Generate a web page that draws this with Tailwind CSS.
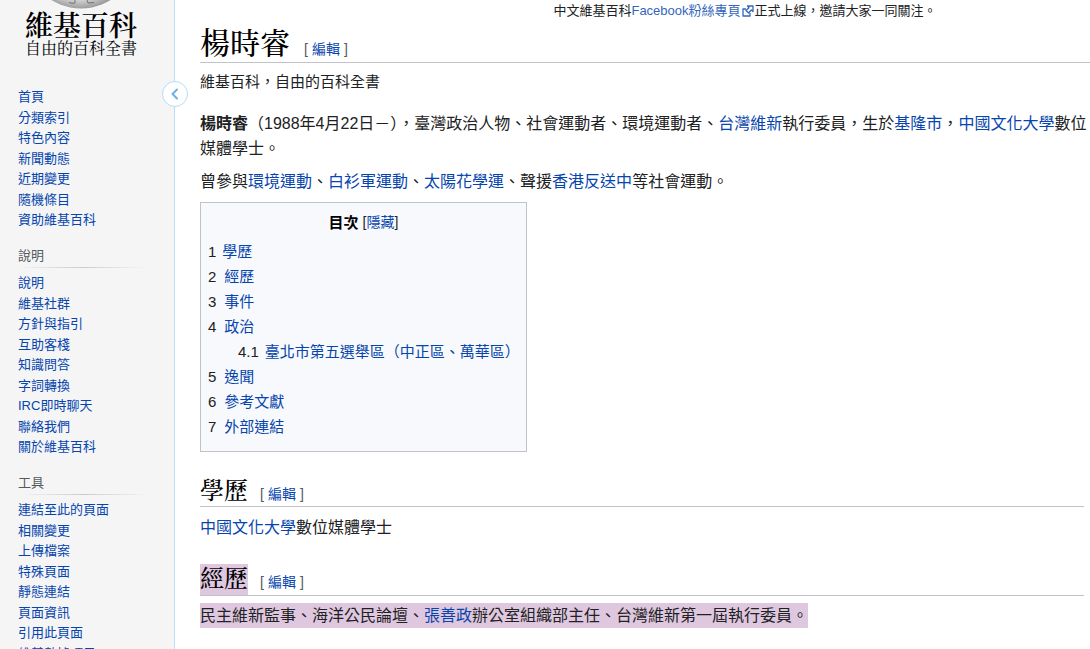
<!DOCTYPE html>
<html lang="zh-Hant-TW">
<head>
<meta charset="utf-8">
<meta name="viewport" content="width=device-width, initial-scale=1">
<title>楊時睿 - 維基百科，自由的百科全書</title>
<script src="https://cdn.jsdelivr.net/npm/@tailwindcss/browser@4"></script>
</head>
<body class="flex h-screen overflow-hidden bg-white font-['Liberation_Sans','Noto_Sans_CJK_TC',sans-serif] text-[#202122]">

<aside class="relative w-[175px] shrink-0 border-r border-[#b9def8] bg-[#f5f5f6]">
  <div class="flex h-full flex-col overflow-hidden">
    <a href="#" aria-label="維基百科首頁" class="flex flex-col pl-[25px] font-['Liberation_Serif','Noto_Serif_CJK_TC','Noto_Sans_CJK_TC',serif] text-black">
      <svg class="ml-6 h-[9px] w-16" viewBox="0 0 64 9" aria-hidden="true">
        <defs><radialGradient id="globe" gradientUnits="userSpaceOnUse" cx="30" cy="-45" r="56"><stop offset=".8" stop-color="#d2d2d2"/><stop offset="1" stop-color="#8e8e8e"/></radialGradient></defs>
        <circle cx="32" cy="-47" r="55.5" fill="url(#globe)"/>
        <path d="M20 2.500l3 .8 3-.3M26 0v3M38 0l1 3 6-.5" fill="none" stroke="#555" stroke-width=".7"/>
      </svg>
      <span class="text-[28px] leading-9 font-semibold">維基百科</span>
      <span class="text-base leading-2">自由的百科全書</span>
    </a>

    <nav class="pt-[34px] pl-[18px] text-[13px] leading-5 text-[#0645ad]">
      <ul class="grid min-h-[143px] content-between">
        <li><a href="#">首頁</a></li>
        <li><a href="#">分類索引</a></li>
        <li><a href="#">特色內容</a></li>
        <li><a href="#">新聞動態</a></li>
        <li><a href="#">近期變更</a></li>
        <li><a href="#">隨機條目</a></li>
        <li><a href="#">資助維基百科</a></li>
      </ul>
      <h3 class="mt-4 text-[#54595d]">說明</h3>
      <div class="mt-px mr-7 h-px bg-linear-to-r from-transparent via-[#c8ccd1] to-transparent"></div>
      <ul class="mt-[5px] grid min-h-[184px] content-between">
        <li><a href="#">說明</a></li>
        <li><a href="#">維基社群</a></li>
        <li><a href="#">方針與指引</a></li>
        <li><a href="#">互助客棧</a></li>
        <li><a href="#">知識問答</a></li>
        <li><a href="#">字詞轉換</a></li>
        <li><a href="#">IRC即時聊天</a></li>
        <li><a href="#">聯絡我們</a></li>
        <li><a href="#">關於維基百科</a></li>
      </ul>
      <h3 class="mt-4 text-[#54595d]">工具</h3>
      <div class="mt-px mr-6 h-px bg-linear-to-r from-transparent via-[#c8ccd1] to-transparent"></div>
      <ul class="mt-[5px] grid min-h-[164px] content-between">
        <li><a href="#">連結至此的頁面</a></li>
        <li><a href="#">相關變更</a></li>
        <li><a href="#">上傳檔案</a></li>
        <li><a href="#">特殊頁面</a></li>
        <li><a href="#">靜態連結</a></li>
        <li><a href="#">頁面資訊</a></li>
        <li><a href="#">引用此頁面</a></li>
        <li><a href="#">維基數據項目</a></li>
      </ul>
    </nav>
  </div>
  <button type="button" aria-label="收合側欄" class="absolute top-[81px] -right-[14px] flex size-[26px] items-center justify-center rounded-full border border-[#b5dcf8] bg-white text-[#6cb0e6]">
    <svg class="size-3" viewBox="0 0 12 12" fill="none" stroke="currentColor" stroke-width="2" stroke-linecap="round" stroke-linejoin="round" aria-hidden="true"><path d="M8 1.500L3.500 6L8 10.500"/></svg>
  </button>
</aside>

<main class="min-w-0 flex-1 pl-[25px]">
  <p class="flex items-center justify-center pl-[200px] text-[13px] leading-[22px]">中文維基百科<a href="#" class="flex items-center text-[#3366bb]">Facebook粉絲專頁<svg class="mx-px size-3" viewBox="0 0 12 12" fill="none" stroke="currentColor" stroke-width="1.300" stroke-linejoin="round" aria-hidden="true"><path d="M4 4H1v7h7V8"/><path d="M5.500 1H11v5.500L9.300 5L6.500 8L4 5.500L7 2.700z"/></svg></a>正式上線，邀請大家一同關注。</p>

  <header class="flex items-baseline gap-[14px] border-b border-[#c0c4c9] pt-[3px]">
    <h1 class="font-['Liberation_Serif','Noto_Serif_CJK_TC','Noto_Sans_CJK_TC',serif] text-[30px] leading-[37px] font-medium text-black">楊時睿</h1>
    <span class="flex gap-1 text-sm leading-5 text-[#54595d]"><span>[</span><a href="#" class="text-[#0645ad]">編輯</a><span>]</span></span>
  </header>
  <p class="mt-[9px] text-[15px] leading-5">維基百科，自由的百科全書</p>

  <p class="mt-[19px] text-base leading-[25px]"><b>楊時睿</b>（1988年4月22日－），臺灣政治人物、社會運動者、環境運動者、<a href="#" class="text-[#0645ad]">台灣維新</a>執行委員，生於<a href="#" class="text-[#0645ad]">基隆市</a>，<a href="#" class="text-[#0645ad]">中國文化大學</a>數位媒體學士。</p>
  <p class="mt-2 text-base leading-[25px]">曾參與<a href="#" class="text-[#0645ad]">環境運動</a>、<a href="#" class="text-[#0645ad]">白衫軍運動</a>、<a href="#" class="text-[#0645ad]">太陽花學運</a>、聲援<a href="#" class="text-[#0645ad]">香港反送中</a>等社會運動。</p>

  <nav aria-label="目次" class="mt-2 w-[327px] border border-[#c0c4c9] bg-[#f8f9fc] px-[7px] pt-[7px] pb-3 text-[15px] leading-[25px]">
    <div class="flex items-center justify-center gap-1"><h2 class="font-bold text-black">目次</h2><span class="text-sm leading-[25px]">[<button type="button" class="text-[#0645ad]">隱藏</button>]</span></div>
    <ul class="mt-1">
      <li class="flex gap-[6px]">1 <a href="#" class="text-[#0645ad]">學歷</a></li>
      <li class="flex gap-2">2 <a href="#" class="text-[#0645ad]">經歷</a></li>
      <li class="flex gap-2">3 <a href="#" class="text-[#0645ad]">事件</a></li>
      <li class="flex flex-wrap gap-x-2">4 <a href="#" class="text-[#0645ad]">政治</a>
        <ul class="w-full pl-[30px]">
          <li class="flex gap-[6px]">4.1 <a href="#" class="whitespace-nowrap text-[#0645ad]">臺北市第五選舉區（中正區、萬華區）</a></li>
        </ul>
      </li>
      <li class="flex gap-2">5 <a href="#" class="text-[#0645ad]">逸聞</a></li>
      <li class="flex gap-2">6 <a href="#" class="text-[#0645ad]">參考文獻</a></li>
      <li class="flex gap-2">7 <a href="#" class="text-[#0645ad]">外部連結</a></li>
    </ul>
  </nav>

  <section class="mt-6 mr-[6px]">
    <header class="flex items-baseline gap-3 border-b border-[#c0c4c9]">
      <h2 class="font-['Liberation_Serif','Noto_Serif_CJK_TC','Noto_Sans_CJK_TC',serif] text-2xl leading-[30px] font-medium text-black">學歷</h2>
      <span class="flex gap-1 text-sm leading-5 text-[#54595d]"><span>[</span><a href="#" class="text-[#0645ad]">編輯</a><span>]</span></span>
    </header>
    <p class="mt-2 text-base leading-[25px]"><a href="#" class="text-[#0645ad]">中國文化大學</a>數位媒體學士</p>
  </section>

  <section class="mt-6 mr-[6px]">
    <header class="flex items-baseline gap-3 border-b border-[#c0c4c9]">
      <h2 class="bg-[#dfc8df] font-['Liberation_Serif','Noto_Serif_CJK_TC','Noto_Sans_CJK_TC',serif] text-2xl leading-[31px] font-medium text-black">經歷</h2>
      <span class="flex gap-1 text-sm leading-5 text-[#54595d]"><span>[</span><a href="#" class="text-[#0645ad]">編輯</a><span>]</span></span>
    </header>
    <p class="mt-[7px] w-fit bg-[#dfc8df] text-base leading-[25px]">民主維新監事、海洋公民論壇、<a href="#" class="text-[#0645ad]">張善政</a>辦公室組織部主任、台灣維新第一屆執行委員。</p>
  </section>
</main>
</body>
</html>
